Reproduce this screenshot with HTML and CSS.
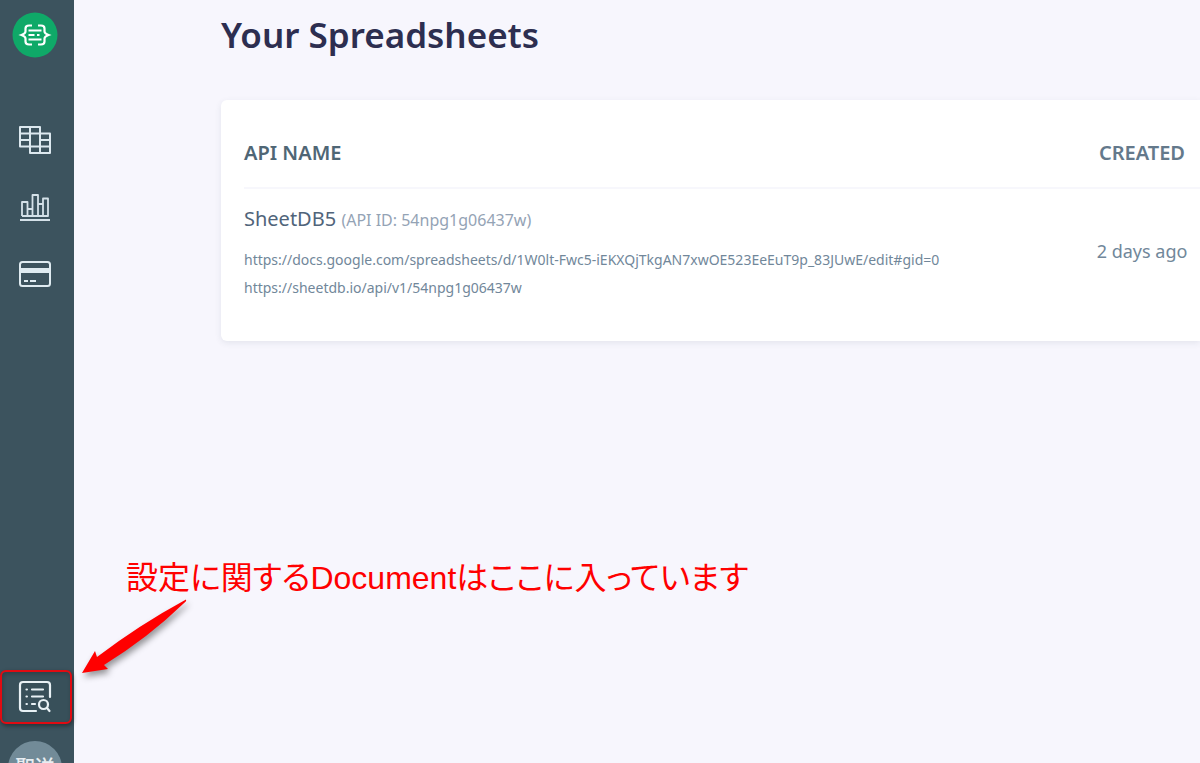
FILE: index.html
```html
<!DOCTYPE html>
<html lang="ja">
<head>
<meta charset="utf-8">
<title>Your Spreadsheets</title>
<link rel="stylesheet" href="styles.css">
</head>
<body>
<div class="app">
  <nav class="sidebar" aria-label="Main">
    <a class="logo" href="#" aria-label="Home">
      <svg width="46" height="46" viewBox="0 0 46 46" fill="none" stroke="#fff" stroke-width="2.2">
        <circle cx="23" cy="23" r="22.500" fill="#0fa968" stroke="none"/>
        <path d="M20 13.500h-3q-3.500 0-3.500 3v3q0 2-4 3.500 4 1.500 4 3.500v3q0 3 3.500 3h3M26 13.500h3q3.500 0 3.500 3v3q0 2 4 3.500-4 1.500-4 3.500v3q0 3-3.500 3h-3M16.500 18.500h13M16.500 23h6M25 23h2.500M16.500 27.500h13"/>
      </svg>
    </a>
    <a class="link" href="#" aria-label="Spreadsheets">
      <svg width="34" height="32" viewBox="0 0 34 32" fill="none" stroke="#dce8ef" stroke-width="2" stroke-linejoin="round">
        <path d="M12 22.500H2V3h20v6.500M2 9.500h30V29H12V3M2 16h10M2 22.500h30M22 9.500V29M22 16h10"/>
      </svg>
    </a>
    <a class="link" href="#" aria-label="Statistics">
      <svg width="34" height="32" viewBox="0 0 34 32" fill="none" stroke="#d4e1e8" stroke-width="1.8" stroke-linejoin="round">
        <path d="M4 25V11h5.500v14M9.500 18h5M14.500 25V4H20v21M20 13h5M25 25V7.500h5V25zM4 25h26M2 29h30"/>
      </svg>
    </a>
    <a class="link" href="#" aria-label="Billing">
      <svg width="34" height="32" viewBox="0 0 34 32" fill="none" stroke="#dfebf1" stroke-width="2">
        <rect x="2" y="4" width="30" height="24" rx="2.500"/>
        <path d="M2 12.500h30" stroke-width="5"/>
        <path d="M6 23h4M12 23h6"/>
      </svg>
    </a>
    <a class="docs" href="#" aria-label="Documentation">
      <svg width="34" height="34" viewBox="0 0 34 34" fill="none" stroke="#e8f1f5" stroke-width="2.200" stroke-linecap="round">
        <path d="M32 17V5q0-3-3-3H5Q2 2 2 5v23q0 3 3 3h13M14 9.500h11M14 16.500h11M14 24h3M8.500 9.500h.4M8.500 16.500h.4M8.500 24h.4"/>
        <circle cx="25.500" cy="24.500" r="4.500"/><path d="m29 28 2.500 3"/>
      </svg>
    </a>
    <a class="avatar" href="#">聖送</a>
  </nav>
  <main class="content">
    <h1>Your Spreadsheets</h1>
    <div class="card">
      <table>
        <thead>
          <tr><th class="name" scope="col">API NAME</th><th class="created" scope="col">CREATED</th></tr>
        </thead>
        <tbody>
          <tr>
            <td>
              <div class="api">SheetDB5 <span>(API ID: 54npg1g06437w)</span></div>
              <a class="url" href="#">https://docs.google.com/spreadsheets/d/1W0lt-Fwc5-iEKXQjTkgAN7xwOE523EeEuT9p_83JUwE/edit#gid=0</a>
              <a class="url" href="#">https://sheetdb.io/api/v1/54npg1g06437w</a>
            </td>
            <td class="ago">2 days ago</td>
          </tr>
        </tbody>
      </table>
    </div>
  </main>
  <p class="note">設定に関するDocumentはここに入っています</p>
  <svg class="arrow" width="120" height="90" viewBox="0 0 120 90" aria-hidden="true">
    <path fill="red" d="M111 8.500Q112 10 108 13 74 46 29 74l4 4L7 82 20 60l2 6Q64 34 111 8.500z"/>
  </svg>
</div>
</body>
</html>
```
FILE: styles.css
```css
* { box-sizing: border-box; }
body { margin: 0; background: #f7f6fd; font-family: "Noto Sans", "Noto Sans CJK JP", sans-serif; }
a { color: inherit; text-decoration: none; }
svg { display: block; }
.app { position: relative; display: flex; height: 100vh; overflow: hidden; }
.sidebar {
  display: flex; flex: none; flex-direction: column; align-items: center;
  width: 74px; padding: 12px 4px 0 0; background: #3c535e;
}
.logo { margin-bottom: 66px; }
.link { margin-bottom: 35px; }
.docs {
  display: grid; place-items: center; width: 72px; height: 54px;
  margin: auto 0 17px 2px; border: 2px solid #e00b12; border-radius: 6px;
  background: #38505a; box-shadow: 1px 2px 4px #0006, inset 1px 2px 4px #0003;
}
.docs svg { margin-right: 2px; }
.avatar {
  flex: none; width: 54px; height: 54px; margin-bottom: -32px; border-radius: 50%;
  background: #728b98; color: #e8eef2; font-size: 20px; font-weight: 500; line-height: 54px; text-align: center;
}
.content { flex: 1; min-width: 0; padding: 8px 0 0 147px; }
h1 { margin: 0 0 38px; color: #2d2e50; font-size: 35px; font-weight: 600; line-height: 54px; }
.card { padding: 18px 0 39px 23px; border-radius: 6px 0 0 6px; background: #fff; box-shadow: 0 2px 6px #3c535e1a; }
table { width: 100%; border-collapse: collapse; }
th { height: 70px; padding: 0; border-bottom: 2px solid #f7f7fc; font-size: 20px; font-weight: 600; line-height: 28px; }
.name { color: #4f6675; text-align: left; }
.created { width: 116px; color: #64798b; text-align: center; }
td { padding: 16px 0 0; color: #71879a; vertical-align: top; }
.api { margin-bottom: 12px; color: #50647a; font-size: 20px; line-height: 28px; }
.api span { color: #94a3b5; font-size: 16px; }
.url { display: block; font-size: 14px; line-height: 28px; }
.ago { padding-top: 48px; font-size: 18px; line-height: 28px; text-align: center; white-space: nowrap; }
.note {
  position: absolute; left: 126px; bottom: 162px; margin: 0; color: red; white-space: nowrap;
  font-family: "Liberation Sans", "Noto Sans CJK JP", sans-serif; font-size: 32px; line-height: 46px;
  font-feature-settings: "palt";
}
.arrow { position: absolute; left: 75px; bottom: 82px; filter: drop-shadow(2px 4px 3px #0006); }
```
